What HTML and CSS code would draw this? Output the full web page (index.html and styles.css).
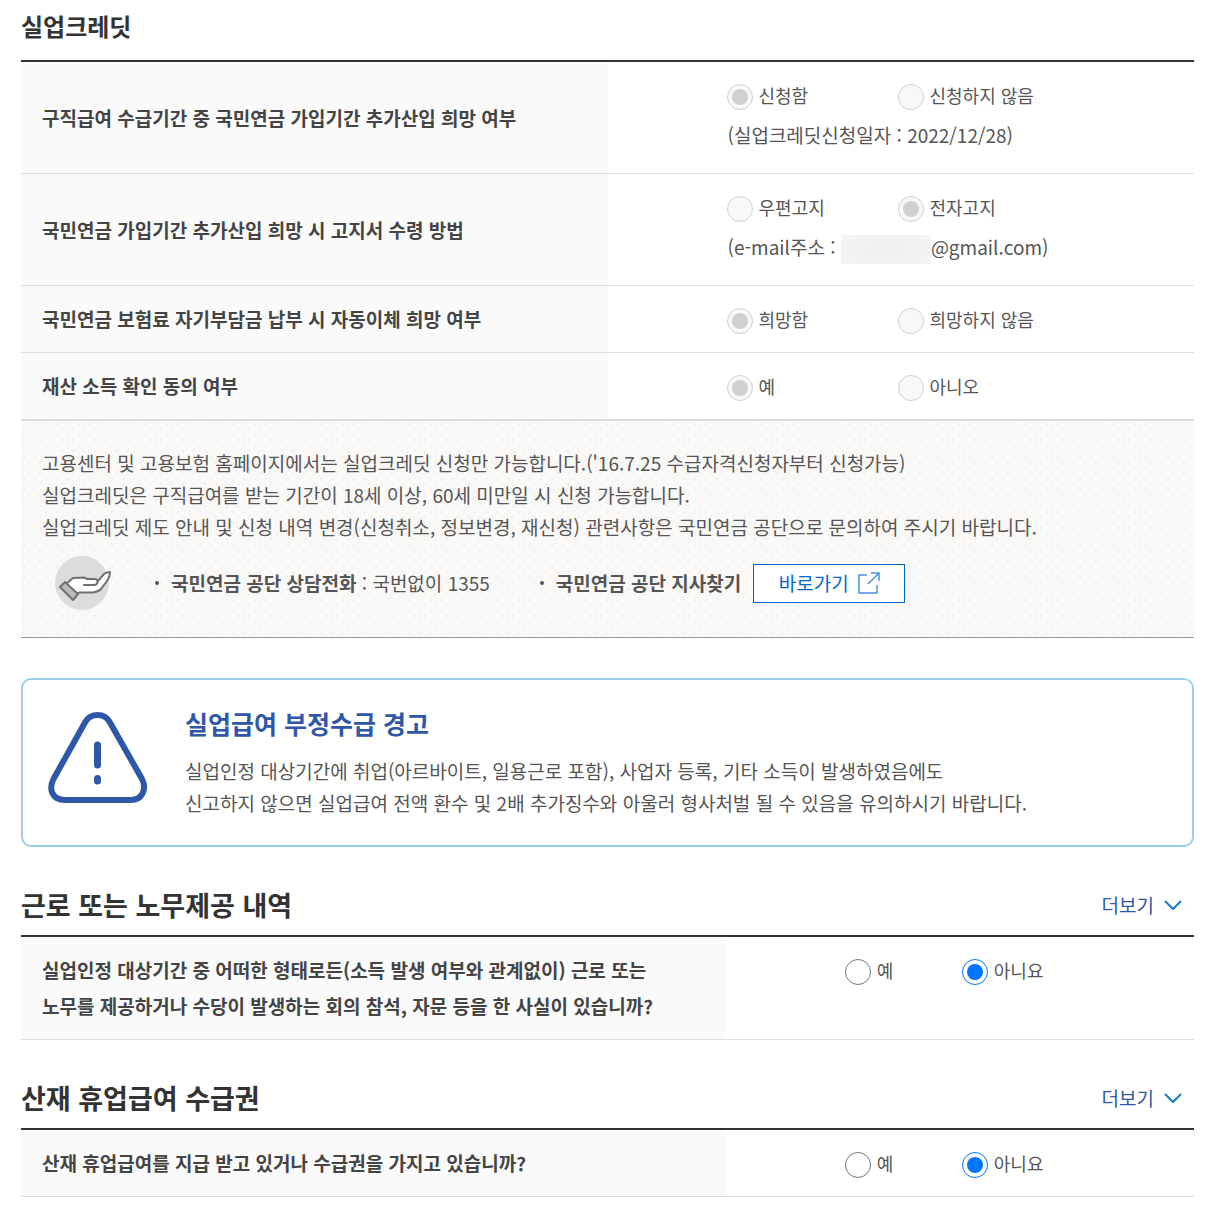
FILE: index.html
```html
<!DOCTYPE html>
<html lang="ko">
<head>
<meta charset="utf-8">
<meta name="viewport" content="width=device-width, initial-scale=1">
<title>실업크레딧</title>
<link rel="stylesheet" href="styles.css">
</head>
<body>
<main class="page">
  <section class="credit">
    <h2 class="credit-title">실업크레딧</h2>
    <table class="form-table form-table-half">
      <tbody>
        <tr class="tall">
          <th scope="row">구직급여 수급기간 중 국민연금 가입기간 추가산입 희망 여부</th>
          <td>
            <div class="options">
              <label class="option"><input type="radio" name="apply" checked disabled>신청함</label>
              <label class="option"><input type="radio" name="apply" disabled>신청하지 않음</label>
            </div>
            <p class="note">(실업크레딧신청일자 : 2022/12/28)</p>
          </td>
        </tr>
        <tr class="tall">
          <th scope="row">국민연금 가입기간 추가산입 희망 시 고지서 수령 방법</th>
          <td>
            <div class="options">
              <label class="option"><input type="radio" name="notice" disabled>우편고지</label>
              <label class="option"><input type="radio" name="notice" checked disabled>전자고지</label>
            </div>
            <p class="note">(e-mail주소 : <span class="masked"></span>@gmail.com)</p>
          </td>
        </tr>
        <tr>
          <th scope="row">국민연금 보험료 자기부담금 납부 시 자동이체 희망 여부</th>
          <td>
            <div class="options">
              <label class="option"><input type="radio" name="auto" checked disabled>희망함</label>
              <label class="option"><input type="radio" name="auto" disabled>희망하지 않음</label>
            </div>
          </td>
        </tr>
        <tr>
          <th scope="row">재산 소득 확인 동의 여부</th>
          <td>
            <div class="options">
              <label class="option"><input type="radio" name="agree" checked disabled>예</label>
              <label class="option"><input type="radio" name="agree" disabled>아니오</label>
            </div>
          </td>
        </tr>
      </tbody>
    </table>
    <div class="info">
      <p>고용센터 및 고용보험 홈페이지에서는 실업크레딧 신청만 가능합니다.('16.7.25 수급자격신청자부터 신청가능)</p>
      <p>실업크레딧은 구직급여를 받는 기간이 18세 이상, 60세 미만일 시 신청 가능합니다.</p>
      <p>실업크레딧 제도 안내 및 신청 내역 변경(신청취소, 정보변경, 재신청) 관련사항은 국민연금 공단으로 문의하여 주시기 바랍니다.</p>
      <div class="contact">
        <svg class="hand" viewBox="0 0 58 54" aria-hidden="true">
          <circle cx="27" cy="27" r="27" fill="#dcdcdc"/>
          <path d="M11 28L18 22L29 21.500L32 23H40Q42 23 43 25L49 18Q52 16 55 16Q55 21 52 25L46 33Q43 36 38 36.500H24L19 40Z" fill="#fff" stroke="#707070" stroke-width="2" stroke-linejoin="round"/>
          <path d="M29 29H40Q43 28 42.500 24" fill="none" stroke="#707070" stroke-width="2" stroke-linecap="round"/>
          <path d="M10 26L5 31L18 44L23 38Z" fill="#bbb" stroke="#707070" stroke-width="2" stroke-linejoin="round"/>
        </svg>
        <ul class="contact-list">
          <li><strong>국민연금 공단 상담전화</strong> : 국번없이 1355</li>
          <li><strong>국민연금 공단 지사찾기</strong>
            <a class="go" href="#">바로가기
              <svg class="go-icon" viewBox="0 0 22 22" fill="none" stroke="#4b92dc" stroke-width="1.500" aria-hidden="true"><path d="M9 3H1V21H19V13M13 1H21V9M21 1L10 12"/></svg>
            </a>
          </li>
        </ul>
      </div>
    </div>
  </section>

  <section class="alert">
    <svg class="alert-icon" viewBox="0 0 100 92" fill="none" stroke="#2f57a8" aria-hidden="true">
      <path d="M37 10.500Q41 3 49.500 3Q58 3 62 10.500L94 67Q98 75 94.500 81.500Q91 88 83 88H17Q8 88 4.500 81.500Q1.500 75 5.500 67Z" stroke-width="6"/>
      <path d="M49.500 33V53" stroke-width="7" stroke-linecap="round"/>
      <path d="M49.500 66.500V69" stroke-width="7" stroke-linecap="round"/>
    </svg>
    <div>
      <h3 class="alert-title">실업급여 부정수급 경고</h3>
      <p>실업인정 대상기간에 취업(아르바이트, 일용근로 포함), 사업자 등록, 기타 소득이 발생하였음에도<br>신고하지 않으면 실업급여 전액 환수 및 2배 추가징수와 아울러 형사처벌 될 수 있음을 유의하시기 바랍니다.</p>
    </div>
  </section>

  <section class="question">
    <header class="question-head">
      <h2>근로 또는 노무제공 내역</h2>
      <a class="more" href="#">더보기
        <svg class="chevron" viewBox="0 0 18 10" fill="none" stroke="#1a78d0" stroke-width="2" aria-hidden="true"><path d="M1 1L9 9L17 1"/></svg>
      </a>
    </header>
    <table class="form-table form-table-wide">
      <tbody>
        <tr>
          <th scope="row">실업인정 대상기간 중 어떠한 형태로든(소득 발생 여부와 관계없이) 근로 또는<br>노무를 제공하거나 수당이 발생하는 회의 참석, 자문 등을 한 사실이 있습니까?</th>
          <td>
            <div class="options">
              <label class="option"><input type="radio" name="work">예</label>
              <label class="option"><input type="radio" name="work" checked>아니요</label>
            </div>
          </td>
        </tr>
      </tbody>
    </table>
  </section>

  <section class="question">
    <header class="question-head">
      <h2>산재 휴업급여 수급권</h2>
      <a class="more" href="#">더보기
        <svg class="chevron" viewBox="0 0 18 10" fill="none" stroke="#1a78d0" stroke-width="2" aria-hidden="true"><path d="M1 1L9 9L17 1"/></svg>
      </a>
    </header>
    <table class="form-table form-table-wide">
      <tbody>
        <tr>
          <th scope="row">산재 휴업급여를 지급 받고 있거나 수급권을 가지고 있습니까?</th>
          <td>
            <div class="options">
              <label class="option"><input type="radio" name="injury">예</label>
              <label class="option"><input type="radio" name="injury" checked>아니요</label>
            </div>
          </td>
        </tr>
      </tbody>
    </table>
  </section>
</main>
</body>
</html>
```
FILE: styles.css
```css
* {
  box-sizing: border-box;
}

body {
  margin: 0;
  background: #fff;
  color: #555;
  font-family: "Noto Sans CJK KR", sans-serif;
  font-size: 19px;
  line-height: 32px;
}

h2,
h3,
p,
ul {
  margin: 0;
  padding: 0;
}

a {
  text-decoration: none;
}

.page {
  padding: 8px 28px 13px 21px;
}

.credit-title {
  padding-bottom: 16px;
  color: #333;
  font-size: 24px;
  line-height: 36px;
}

/* Form tables */
.form-table {
  width: 100%;
  table-layout: fixed;
  border-collapse: separate;
  border-spacing: 0;
  border-top: 2px solid #333;
}

.form-table th {
  padding: 15px 21px;
  border-bottom: 1px solid #ddd;
  background: #fafafa;
  color: #444;
  line-height: 36px;
  text-align: left;
  vertical-align: middle;
}

.form-table td {
  padding: 13px 0 13px 120px;
  border-bottom: 1px solid #ddd;
  vertical-align: top;
}

.form-table-half th {
  width: 50%;
}

.form-table-half td {
  padding-left: 119px;
}

.form-table-wide th {
  width: 60%;
}

.form-table .tall td {
  padding-bottom: 18px;
}

.options {
  display: flex;
}

.option {
  display: flex;
  align-items: center;
  gap: 6px;
  width: 171px;
  font-size: 18px;
  line-height: 40px;
  white-space: nowrap;
}

.form-table-wide .option {
  width: 117px;
}

.option input {
  appearance: none;
  display: grid;
  place-items: center;
  flex: none;
  width: 26px;
  height: 26px;
  margin: 4px 0 0;
  border: 1px solid #767676;
  border-radius: 50%;
  background: #fff;
}

.option input:checked {
  border-color: #0075ff;
}

.option input:checked::before {
  content: "";
  width: 16px;
  height: 16px;
  border-radius: 50%;
  background: #0075ff;
}

.option input:disabled {
  border-color: #d0d0d0;
  background: #f8f8f8;
}

.option input:disabled::before {
  background: #d0d0d0;
}

.note {
  padding-left: 1px;
  line-height: 40px;
  white-space: nowrap;
}

.masked {
  display: inline-block;
  width: 90px;
  height: 29px;
  vertical-align: middle;
  background: radial-gradient(#eee, #f5f5f5);
}

/* Notice under the credit table */
.info {
  padding: 26px 21px 27px;
  border-top: 1px solid #ddd;
  border-bottom: 1px solid #999;
  background-color: #faf9f7;
  background-image:
    radial-gradient(circle at 3px 3px, #f3f2f0 1px, transparent 2px),
    radial-gradient(circle at 8px 8px, #f3f2f0 1px, transparent 2px);
  background-size: 11px 11px;
}

.contact {
  display: flex;
  align-items: center;
  gap: 42px;
  margin-top: 13px;
  padding-left: 13px;
}

.hand {
  flex: none;
  width: 58px;
  height: 54px;
}

.contact-list {
  display: flex;
  align-items: center;
  gap: 50px;
  list-style: none;
}

.contact-list li {
  display: flex;
  align-items: center;
  white-space: pre-wrap;
}

.contact-list li::before {
  content: "";
  width: 4px;
  height: 4px;
  margin-right: 12px;
  border-radius: 50%;
  background: #555;
}

.go {
  display: flex;
  align-items: center;
  justify-content: center;
  gap: 9px;
  width: 152px;
  height: 39px;
  margin-left: 12px;
  border: 1px solid #0068c8;
  background: #fff;
  color: #0068c8;
  white-space: nowrap;
}

.go-icon {
  width: 22px;
  height: 22px;
}

/* Warning box */
.alert {
  display: flex;
  align-items: flex-start;
  gap: 37px;
  margin-top: 40px;
  padding: 23px 25px 26px;
  border: 2px solid #9ccfe7;
  border-radius: 10px;
}

.alert-icon {
  flex: none;
  width: 100px;
  height: 92px;
  margin-top: 9px;
}

.alert-title {
  margin-bottom: 12px;
  color: #2f57a8;
  font-size: 25px;
  line-height: 40px;
}

/* Question sections */
.question {
  margin-top: 38px;
}

.question-head {
  display: flex;
  align-items: center;
  justify-content: space-between;
  padding: 0 12px 11px 0;
}

.question-head h2 {
  color: #333;
  font-size: 27px;
  line-height: 39px;
}

.more {
  display: flex;
  align-items: center;
  gap: 10px;
  color: #2f57a8;
}

.chevron {
  width: 18px;
  height: 10px;
}
```
